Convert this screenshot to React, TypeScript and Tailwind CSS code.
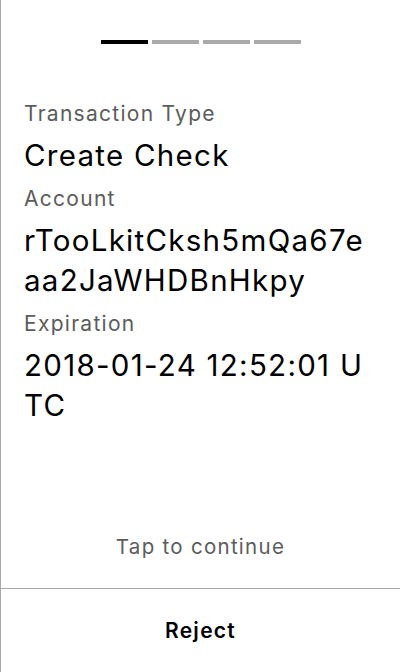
import React from "react";

export default function App() {
  const font = { fontFamily: "Inter, 'Noto Sans', sans-serif" };
  return (
    <div
      className="h-[672px] w-[400px] flex flex-col bg-white border-l border-[#aaaaaa] text-black tracking-[0.08em]"
      style={font}
    >
      <div className="flex justify-center gap-[4px] pt-[40px]">
        <div className="w-[47px] h-[4px] bg-black" />
        <div className="w-[47px] h-[4px] bg-[#aaaaaa]" />
        <div className="w-[47px] h-[4px] bg-[#aaaaaa]" />
        <div className="w-[47px] h-[4px] bg-[#aaaaaa]" />
      </div>
      <div className="flex-1 flex flex-col pl-[23px] pr-[24px] pt-[56px]">
        <div className="text-[21px] leading-[28px] text-[#5c5c5c]">Transaction Type</div>
        <div className="text-[29.5px] leading-[40px] mt-[7px] break-all">Create Check</div>
        <div className="text-[21px] leading-[28px] text-[#5c5c5c] mt-[10px]">Account</div>
        <div className="text-[29.5px] leading-[40px] mt-[7px] break-all">
          rTooLkitCksh5mQa67eaa2JaWHDBnHkpy
        </div>
        <div className="text-[21px] leading-[28px] text-[#5c5c5c] mt-[10px]">Expiration</div>
        <div className="text-[29.5px] leading-[40px] mt-[7px] break-all">
          2018-01-24 12:52:01 UTC
        </div>
      </div>
      <div className="text-center text-[20.5px] leading-[28px] text-[#5c5c5c] pb-[27px]">
        Tap to continue
      </div>
      <div className="h-[84px] border-t border-[#aaaaaa] flex items-center justify-center">
        <span className="text-[21px] font-semibold">Reject</span>
      </div>
    </div>
  );
}
